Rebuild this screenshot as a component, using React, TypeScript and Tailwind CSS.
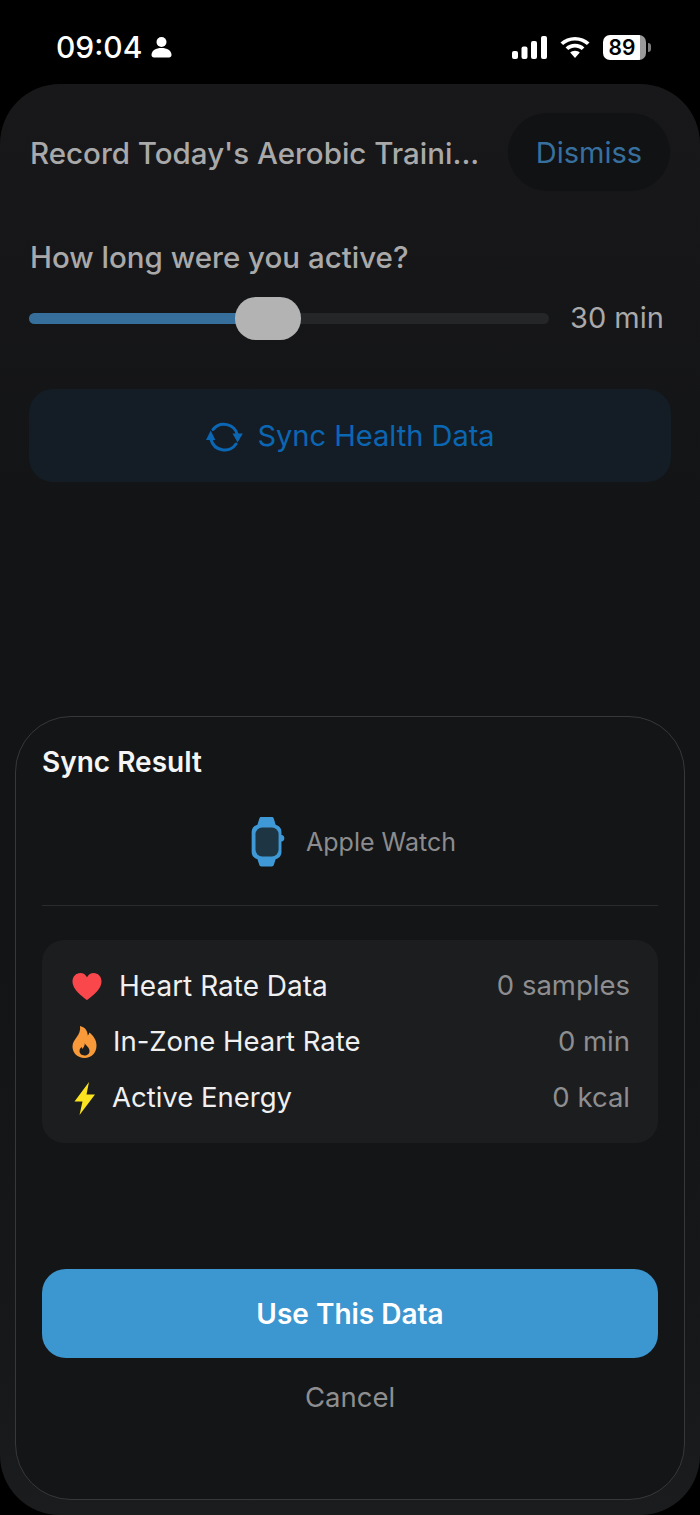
function PersonIcon() {
  return (
    <svg width="21" height="22" viewBox="0 0 21 22" fill="#fff">
      <circle cx="10.5" cy="6" r="5" />
      <path d="M0.5 19c0-4.500 4.500-7 10-7s10 2.500 10 7c0 1.600-1 2.500-2.500 2.500H3c-1.500 0-2.500-.9-2.500-2.500z" />
    </svg>
  );
}

function SignalIcon() {
  return (
    <svg width="35" height="23" viewBox="0 0 35 23" fill="#fff">
      <rect x="0" y="15" width="6" height="8" rx="2" />
      <rect x="9.500" y="10.500" width="6" height="12.500" rx="2" />
      <rect x="19" y="5" width="6" height="18" rx="2" />
      <rect x="29" y="0" width="6" height="23" rx="2" />
    </svg>
  );
}

function WifiIcon() {
  return (
    <svg width="30" height="21" viewBox="0 0 30 23" preserveAspectRatio="none" fill="#fff">
      <path d="M15 0C9.200 0 4.200 2.300.5 6l2.600 2.800C6.200 5.700 10.300 3.800 15 3.800s8.800 1.900 11.900 5L29.500 6C25.800 2.300 20.800 0 15 0z" />
      <path d="M15 7.500c-3.700 0-7 1.500-9.400 3.900l2.700 2.800c1.700-1.700 4.100-2.800 6.700-2.800s5 1.100 6.700 2.800l2.700-2.800C22 9 18.700 7.500 15 7.500z" />
      <path d="M15 15c-1.900 0-3.600.8-4.800 2L15 23l4.800-6c-1.200-1.200-2.900-2-4.800-2z" />
    </svg>
  );
}

function SyncIcon() {
  return (
    <svg width="37" height="32" viewBox="0 0 37 32" fill="none" stroke="#0b66b3" strokeWidth="3" strokeLinecap="round">
      <path d="M7 9.500A14 14 0 0 1 31.500 15" />
      <path d="M5 19.500A14 14 0 0 0 30 24" />
      <path d="M0 20L4.700 10.500 9.400 20z" fill="#0b66b3" stroke="none" />
      <path d="M26.500 13.500L36.800 13.500 31.600 22.500z" fill="#0b66b3" stroke="none" />
    </svg>
  );
}

function WatchIcon() {
  return (
    <svg width="36" height="50" viewBox="0 0 36 52">
      <path
        d="M9 1.500C9.500.5 10 0 11 0h11c1 0 1.500.5 2 1.500L26 8c3.500 1 6 3.500 6 7.500v3.100c2 .2 3 1.500 3 3.400s-1 3.200-3 3.400v11.100c0 4-2.500 6.500-6 7.500l-2 6c-.5 1-1 1.500-2 1.500H11c-1 0-1.500-.5-2-1.500l-2-6c-3.500-1-6-3.500-6-7.500v-21c0-4 2.500-6.500 6-7.500z"
        fill="#3e99d6"
      />
      <rect x="5" y="11" width="24" height="30" rx="7" fill="#1e3543" />
    </svg>
  );
}

function HeartIcon() {
  return (
    <svg width="30" height="27" viewBox="0 0 30 27">
      <path
        d="M15 27C13 25.500 0.500 17.500 0.500 8.500 0.500 3.500 4 0 8.300 0c2.900 0 5.300 1.500 6.700 4.200C16.400 1.500 18.800 0 21.700 0c4.300 0 7.800 3.500 7.800 8.500C29.500 17.500 17 25.500 15 27z"
        fill="#f9474c"
      />
    </svg>
  );
}

function FlameIcon() {
  return (
    <svg width="25" height="32" viewBox="0 0 25 32">
      <path
        d="M8 0c6 1.500 7.500 5.500 7.800 9.500.8-.8 1.300-1.800 1.500-3 4.500 3.500 7.200 8 7.200 13C24.500 26.800 19.500 32 12.500 32S.5 27 .5 20.500C.5 13 9.500 9.500 8 0z"
        fill="#f99a3a"
      />
      <path
        d="M12.800 17c.5 2.500 4.700 4 4.700 8 0 2.900-2.200 4.500-5 4.500s-5-1.800-5-4.400c0-2.100 1.200-3.200 2.200-4 .2.900.5 1.400 1 1.800.8-1.800 2.300-3.400 2.100-5.900z"
        fill="#1c1d1f"
      />
    </svg>
  );
}

function BoltIcon() {
  return (
    <svg width="22" height="33" viewBox="0 0 22 33">
      <path d="M15 0L0.500 19.500h8L5.500 33 21 12.500h-8.500z" fill="#fbe320" />
    </svg>
  );
}

function StatRow({ icon, label, value, gap, size }: { icon: React.ReactNode; label: string; value: string; gap: string; size: string }) {
  return (
    <div className="flex h-[56px] items-center justify-between">
      <div className={`flex items-center ${gap}`}>
        {icon}
        <span className={`${size} text-[#f0f0f1]`}>{label}</span>
      </div>
      <span className="text-[27.500px] text-[#8e8e90]">{value}</span>
    </div>
  );
}

export default function App() {
  return (
    <div className="flex h-[1515px] w-[700px] flex-col overflow-hidden bg-black font-['Inter',sans-serif]">
      {/* status bar */}
      <div className="flex h-[84px] shrink-0 items-center justify-between pl-[56px] pr-[49px] pt-[10px]">
        <div className="flex items-center gap-[9px]">
          <span className="text-[30px] font-medium leading-none text-white">09:04</span>
          <PersonIcon />
        </div>
        <div className="flex items-center gap-[13px]">
          <SignalIcon />
          <WifiIcon />
          <div className="flex items-center gap-[2px]">
            <div className="flex h-[25px] w-[43px] items-center justify-center rounded-[7px] bg-[linear-gradient(90deg,#fff_86%,#9a9a9a_86%)]">
              <span className="pr-[5px] text-[21px] font-semibold leading-none text-black">89</span>
            </div>
            <div className="h-[9px] w-[3px] rounded-r-full bg-[#7d7d7d]" />
          </div>
        </div>
      </div>

      {/* background panel */}
      <div className="flex flex-1 flex-col rounded-[60px] bg-[linear-gradient(180deg,#18181a_0%,#131416_30%,#131416_60%,#17181a_90%,#1b1c1e_100%)] px-[15px] pb-[15px]">
        <div className="flex h-[155px] shrink-0 items-start justify-between pl-[15px] pr-[15px] pt-[29px]">
          <span className="mt-[22px] text-[29.500px] font-medium leading-[36px] text-[#a9a9aa]">
            Record Today's Aerobic Traini...
          </span>
          <div className="flex h-[78px] w-[162px] items-center justify-center rounded-full bg-[#111214]">
            <span className="pt-[2px] text-[29px] text-[#37709f]">Dismiss</span>
          </div>
        </div>

        <div className="pl-[15px] text-[29.500px] font-medium leading-[36px] text-[#a9a9aa]">How long were you active?</div>

        <div className="mt-[21px] flex h-[44px] items-center pl-[14px]">
          <div className="relative h-[11px] w-[520px] rounded-full bg-[#252628]">
            <div className="h-full w-[225px] rounded-l-full bg-[#366f9b]" />
            <div className="absolute left-[206px] top-[-16px] h-[43px] w-[66px] rounded-[21px] bg-[#b3b3b3]" />
          </div>
          <span className="ml-[21px] text-[29px] text-[#a9a9aa]">30 min</span>
        </div>

        <div className="ml-[14px] mt-[49px] flex h-[93px] w-[642px] items-center justify-center gap-[14px] rounded-[24px] bg-[#141d25] pl-[1px]">
          <SyncIcon />
          <span className="text-[29px] text-[#0b66b3]">Sync Health Data</span>
        </div>

        {/* sync result sheet */}
        <div className="mt-auto flex h-[784px] flex-col rounded-[56px] border-[1.500px] border-[#37383a] bg-[#141517] px-[26px]">
          <div className="pt-[26px] text-[28px] font-semibold leading-[38px] text-[#f5f5f5]">Sync Result</div>

          <div className="mt-[28px] flex h-[66px] items-center justify-center gap-[20px] pl-[6px]">
            <WatchIcon />
            <span className="pt-[2px] text-[25px] text-[#8c8c8e]">Apple Watch</span>
          </div>

          <div className="mt-[30px] h-px bg-[#2a2b2d]" />

          <div className="mt-[34px] rounded-[22px] bg-[#1c1d1f] pb-[17px] pl-[30px] pr-[28px] pt-[18px]">
            <StatRow icon={<HeartIcon />} label="Heart Rate Data" value="0 samples" gap="gap-[17px]" size="text-[28px]" />
            <StatRow icon={<FlameIcon />} label="In-Zone Heart Rate" value="0 min" gap="gap-[16px]" size="text-[27.500px]" />
            <StatRow
              icon={<span className="flex w-[25px] justify-center"><BoltIcon /></span>}
              label="Active Energy"
              value="0 kcal"
              gap="gap-[15px]"
              size="text-[27.500px]"
            />
          </div>

          <div className="mt-[126px] flex h-[89px] items-center justify-center rounded-[24px] bg-[#3c96d0]">
            <span className="pt-[1px] text-[28px] font-semibold text-white">Use This Data</span>
          </div>

          <div className="mt-[20px] text-center text-[27.500px] leading-[38px] text-[#8e8e90]">Cancel</div>
        </div>
      </div>
    </div>
  );
}
